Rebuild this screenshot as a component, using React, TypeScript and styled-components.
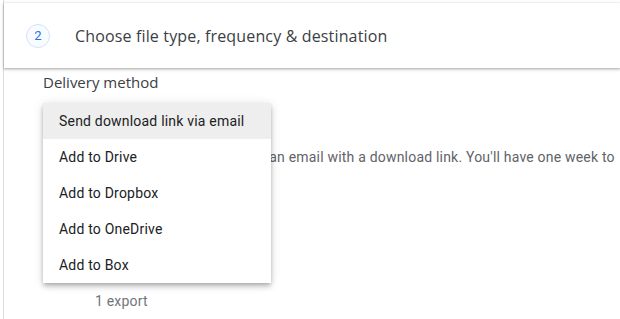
import styled, { createGlobalStyle } from "styled-components";

const GlobalStyle = createGlobalStyle`
  html, body {
    margin: 0;
    padding: 0;
    background: #fff;
    overflow: hidden;
  }
  body {
    font-family: Roboto, "Liberation Sans", sans-serif;
  }
`;

const options = [
  "Send download link via email",
  "Add to Drive",
  "Add to Dropbox",
  "Add to OneDrive",
  "Add to Box",
];

export default function App() {
  return (
    <>
      <GlobalStyle />
      <Frame>
        <StepHeader>
          <StepBadge>2</StepBadge>
          <StepTitle>Choose file type, frequency &amp; destination</StepTitle>
        </StepHeader>
        <Body>
          <SectionLabel>Delivery method</SectionLabel>
          <FieldArea>
            <SelectBox />
            <Description>
              When the files are ready, we'll send an email with a download link. You'll have one week to
              download your files.
            </Description>
            <ExportCount>1 export</ExportCount>
            <Menu>
              {options.map((opt, i) => (
                <MenuItem key={opt} $active={i === 0}>
                  {opt}
                </MenuItem>
              ))}
            </Menu>
          </FieldArea>
        </Body>
      </Frame>
    </>
  );
}

const Frame = styled.div`
  margin-left: 3px;
  height: 319px;
  border-left: 1px solid #dadce0;
  box-sizing: border-box;
  padding-top: 3px;
`;

const StepHeader = styled.div`
  height: 65px;
  box-sizing: border-box;
  display: flex;
  align-items: center;
  padding-left: 22px;
  gap: 25px;
  background: #fff;
  box-shadow: 0 1px 2px 0 rgba(60, 64, 67, 0.3), 0 1px 3px 1px rgba(60, 64, 67, 0.15);
`;

const StepBadge = styled.div`
  width: 24px;
  height: 24px;
  border-radius: 50%;
  border: 1px solid #d2e3fc;
  background: #f8fbff;
  color: #1a73e8;
  font-size: 13px;
  display: flex;
  align-items: center;
  justify-content: center;
  box-sizing: border-box;
`;

const StepTitle = styled.div`
  font-family: "Open Sans", sans-serif;
  font-size: 16px;
  letter-spacing: 0.15px;
  color: #3c4043;
`;

const Body = styled.div`
  padding: 3px 0 0 39px;
`;

const SectionLabel = styled.div`
  font-family: "Open Sans", sans-serif;
  font-size: 15px;
  color: #3c4043;
  line-height: 22px;
`;

const FieldArea = styled.div`
  position: relative;
  padding-top: 10px;
`;

const SelectBox = styled.div`
  width: 228px;
  height: 36px;
  box-sizing: border-box;
  border-bottom: 1px solid #80868b;
  background: #f1f3f4;
`;

const Description = styled.div`
  margin-top: 8px;
  width: 578px;
  font-size: 14px;
  letter-spacing: 0.2px;
  line-height: 20px;
  color: #5f6368;
`;

const ExportCount = styled.div`
  margin-top: 104px;
  padding-left: 52px;
  font-size: 14px;
  letter-spacing: 0.2px;
  line-height: 20px;
  color: #70757a;
`;

const Menu = styled.div`
  position: absolute;
  top: 10px;
  left: 0;
  width: 228px;
  background: #fff;
  box-shadow: 0 2px 4px -1px rgba(0, 0, 0, 0.2), 0 4px 5px 0 rgba(0, 0, 0, 0.14),
    0 1px 10px 0 rgba(0, 0, 0, 0.12);
`;

const MenuItem = styled.div<{ $active?: boolean }>`
  height: 36px;
  display: flex;
  align-items: center;
  padding: 0 16px;
  font-size: 14px;
  letter-spacing: 0.2px;
  color: #202124;
  background: ${({ $active }) => ($active ? "#eeeeee" : "#fff")};
`;
